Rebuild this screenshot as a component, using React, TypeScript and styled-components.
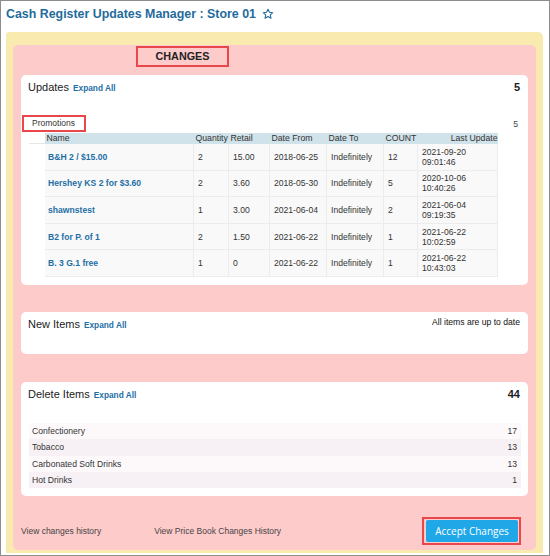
import React from "react";
import styled, { createGlobalStyle } from "styled-components";

const GlobalStyle = createGlobalStyle`
  html, body { margin: 0; padding: 0; background: #fff; }
  body { font-family: "Liberation Sans", Arial, sans-serif; }
  * { box-sizing: border-box; }
`;

const Frame = styled.div`
  width: 550px;
  height: 556px;
  border: 1px solid #8c8c8c;
  background: #fff;
  display: flex;
  flex-direction: column;
`;

const TitleBar = styled.div`
  height: 31px;
  padding: 6px 0 0 5px;
  display: flex;
  align-items: flex-start;
  gap: 6px;
`;

const Title = styled.h1`
  margin: 0;
  font-size: 12.4px;
  line-height: 15px;
  font-weight: bold;
  color: #1f6b9c;
`;

const StarIcon = styled.svg`
  width: 12px;
  height: 12px;
  margin-top: 1px;
`;

const YellowPanel = styled.div`
  flex: 1;
  margin: 0 6px 2px 5px;
  padding: 13px 7px 3px 7px;
  background: #f9eab0;
  border-radius: 3px 5px 0 0;
  display: flex;
`;

const PinkPanel = styled.div`
  flex: 1;
  background: #fecbcb;
  border-radius: 5px;
  padding: 1px 8px 5px 8px;
  display: flex;
  flex-direction: column;
`;

const Callout = styled.div<{ $bold?: boolean }>`
  border: 2px solid #e9474c;
  color: #333;
  font-size: ${(p) => (p.$bold ? "10.8px" : "8.5px")};
  font-weight: ${(p) => (p.$bold ? "bold" : "normal")};
  white-space: nowrap;
`;

const ChangesBox = styled(Callout)`
  align-self: flex-start;
  margin-left: 115px;
  width: 93px;
  height: 21px;
  line-height: 17px;
  text-align: center;
  color: #222;
`;

const Card = styled.section<{ $height: number; $gap: number }>`
  background: #fff;
  border-radius: 5px;
  margin-top: ${(p) => p.$gap}px;
  height: ${(p) => p.$height}px;
  padding: 5px 8px 0 7px;
  display: flex;
  flex-direction: column;
`;

const CardHeader = styled.div`
  display: flex;
  align-items: flex-start;
  justify-content: space-between;
  height: 14px;
`;

const CardTitle = styled.div`
  font-size: 11px;
  line-height: 14px;
  color: #1c1c1c;
`;

const ExpandLink = styled.a`
  margin-left: 4px;
  font-size: 8.3px;
  font-weight: bold;
  color: #1e6fa5;
  text-decoration: none;
`;

const Count = styled.div`
  font-size: 11px;
  line-height: 14px;
  font-weight: bold;
  color: #1c1c1c;
`;

const StatusNote = styled.div`
  font-size: 8.6px;
  line-height: 11px;
  color: #111;
`;

const GroupRow = styled.div`
  margin: 21px 0 0 -6px;
  padding-right: 2px;
  display: flex;
  align-items: center;
  justify-content: space-between;
`;

const PromoBox = styled(Callout)`
  height: 17px;
  line-height: 13px;
  padding: 0 9px 0 8px;
`;

const GroupCount = styled.div`
  font-size: 8.6px;
  color: #444;
`;

const Table = styled.table`
  margin: 1px 0 0 1px;
  width: 468px;
  table-layout: fixed;
  border-collapse: collapse;
  font-size: 8.6px;
  color: #333;
`;

const Th = styled.th<{ $right?: boolean; $blank?: boolean }>`
  height: 10px;
  padding: 0 ${(p) => (p.$right ? "0" : "2px")} 0 2px;
  line-height: 10px;
  font-size: 8.7px;
  font-weight: normal;
  text-align: ${(p) => (p.$right ? "right" : "left")};
  color: #333;
  background: ${(p) => (p.$blank ? "#fff" : "#d0e2ea")};
  border-bottom: 1px solid ${(p) => (p.$blank ? "#e6e6e6" : "#d0e2ea")};
  white-space: nowrap;
  overflow: hidden;
`;

const Td = styled.td<{ $blank?: boolean }>`
  height: 26.6px;
  padding: 0 3px 0 4px;
  line-height: 10px;
  background: ${(p) => (p.$blank ? "#fff" : "#f9f9f9")};
  border: 1px solid ${(p) => (p.$blank ? "#fff" : "#ececec")};
  vertical-align: middle;
  white-space: nowrap;
`;

const NameTd = styled(Td)`
  font-weight: bold;
  color: #1e6fa5;
  padding-left: 3px;
`;

const CategoryList = styled.div`
  margin: 22px -1px 0 1px;
`;

const CategoryRow = styled.div<{ $alt: boolean }>`
  height: 16.25px;
  padding: 0 4px 0 3px;
  display: flex;
  align-items: center;
  justify-content: space-between;
  font-size: 8.6px;
  color: #333;
  background: ${(p) => (p.$alt ? "#f7f1f5" : "#fdf9fb")};
`;

const Footer = styled.div`
  margin-top: 21px;
  height: 28px;
  display: flex;
  align-items: center;
`;

const FooterLink = styled.a<{ $offset: number }>`
  margin-left: ${(p) => p.$offset}px;
  font-size: 8.5px;
  color: #444;
  text-decoration: none;
`;

const ButtonFrame = styled.div`
  margin: 0 7px 0 auto;
  border: 2px solid #e9474c;
  padding: 1px 1px 1px 2px;
  height: 28px;
  display: flex;
`;

const AcceptButton = styled.button`
  width: 92px;
  border: none;
  border-radius: 2px;
  background: #1fa7e8;
  color: #fff;
  font-family: "Open Sans", sans-serif;
  font-size: 10px;
  padding: 0;
  cursor: pointer;
`;

type Promo = {
  name: string;
  qty: string;
  retail: string;
  from: string;
  to: string;
  count: string;
  date: string;
  time: string;
};

const promos: Promo[] = [
  { name: "B&H 2 / $15.00", qty: "2", retail: "15.00", from: "2018-06-25", to: "Indefinitely", count: "12", date: "2021-09-20", time: "09:01:46" },
  { name: "Hershey KS 2 for $3.60", qty: "2", retail: "3.60", from: "2018-05-30", to: "Indefinitely", count: "5", date: "2020-10-06", time: "10:40:26" },
  { name: "shawnstest", qty: "1", retail: "3.00", from: "2021-06-04", to: "Indefinitely", count: "2", date: "2021-06-04", time: "09:19:35" },
  { name: "B2 for P. of 1", qty: "2", retail: "1.50", from: "2021-06-22", to: "Indefinitely", count: "1", date: "2021-06-22", time: "10:02:59" },
  { name: "B. 3 G.1 free", qty: "1", retail: "0", from: "2021-06-22", to: "Indefinitely", count: "1", date: "2021-06-22", time: "10:43:03" },
];

const categories = [
  { name: "Confectionery", count: 17 },
  { name: "Tobacco", count: 13 },
  { name: "Carbonated Soft Drinks", count: 13 },
  { name: "Hot Drinks", count: 1 },
];

const colWidths = [15, 149, 35, 41, 57, 57, 34, 80];

export default function App() {
  return (
    <>
      <GlobalStyle />
      <Frame>
        <TitleBar>
          <Title>Cash Register Updates Manager : Store 01</Title>
          <StarIcon viewBox="0 0 24 24" fill="none" stroke="#1f6b9c" strokeWidth="2.2" strokeLinejoin="round">
            <polygon points="12,2.5 14.9,8.6 21.5,9.4 16.6,13.9 17.9,20.5 12,17.2 6.1,20.5 7.4,13.9 2.5,9.4 9.1,8.6" />
          </StarIcon>
        </TitleBar>
        <YellowPanel>
          <PinkPanel>
            <ChangesBox $bold>CHANGES</ChangesBox>

            <Card $height={210} $gap={8}>
              <CardHeader>
                <CardTitle>
                  Updates<ExpandLink href="#">Expand All</ExpandLink>
                </CardTitle>
                <Count>5</Count>
              </CardHeader>
              <GroupRow>
                <PromoBox>Promotions</PromoBox>
                <GroupCount>5</GroupCount>
              </GroupRow>
              <Table>
                <colgroup>
                  {colWidths.map((w, i) => (
                    <col key={i} style={{ width: w }} />
                  ))}
                </colgroup>
                <thead>
                  <tr>
                    <Th $blank />
                    <Th>Name</Th>
                    <Th>Quantity</Th>
                    <Th>Retail</Th>
                    <Th>Date From</Th>
                    <Th>Date To</Th>
                    <Th>COUNT</Th>
                    <Th $right>Last Update</Th>
                  </tr>
                </thead>
                <tbody>
                  {promos.map((p) => (
                    <tr key={p.name}>
                      <Td $blank />
                      <NameTd>{p.name}</NameTd>
                      <Td>{p.qty}</Td>
                      <Td>{p.retail}</Td>
                      <Td>{p.from}</Td>
                      <Td>{p.to}</Td>
                      <Td>{p.count}</Td>
                      <Td>
                        {p.date}
                        <br />
                        {p.time}
                      </Td>
                    </tr>
                  ))}
                </tbody>
              </Table>
            </Card>

            <Card $height={42} $gap={27}>
              <CardHeader>
                <CardTitle>
                  New Items<ExpandLink href="#">Expand All</ExpandLink>
                </CardTitle>
                <StatusNote>All items are up to date</StatusNote>
              </CardHeader>
            </Card>

            <Card $height={114} $gap={28}>
              <CardHeader>
                <CardTitle>
                  Delete Items<ExpandLink href="#">Expand All</ExpandLink>
                </CardTitle>
                <Count>44</Count>
              </CardHeader>
              <CategoryList>
                {categories.map((c, i) => (
                  <CategoryRow key={c.name} $alt={i % 2 === 1}>
                    <span>{c.name}</span>
                    <span>{c.count}</span>
                  </CategoryRow>
                ))}
              </CategoryList>
            </Card>

            <Footer>
              <FooterLink href="#" $offset={0}>View changes history</FooterLink>
              <FooterLink href="#" $offset={53}>View Price Book Changes History</FooterLink>
              <ButtonFrame>
                <AcceptButton>Accept Changes</AcceptButton>
              </ButtonFrame>
            </Footer>
          </PinkPanel>
        </YellowPanel>
      </Frame>
    </>
  );
}
